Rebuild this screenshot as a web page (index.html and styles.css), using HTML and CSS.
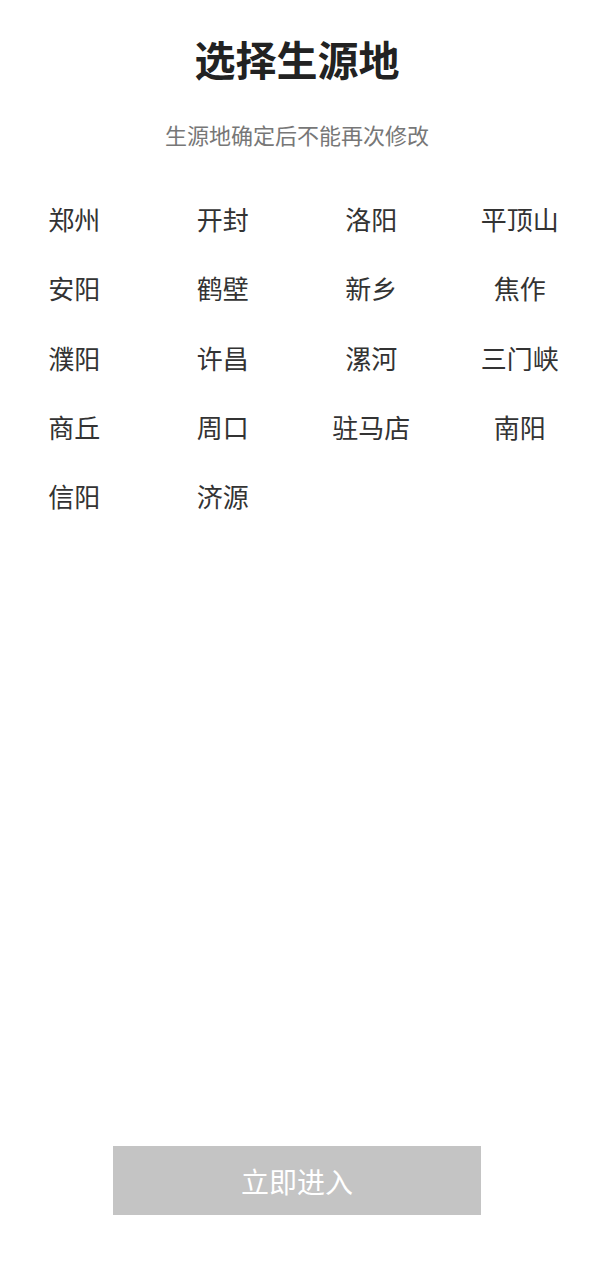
FILE: index.html
```html
<!DOCTYPE html>
<html lang="zh">
<head>
<meta charset="utf-8">
<title>选择生源地</title>
<link rel="stylesheet" href="styles.css">
</head>
<body>
<div class="page">
  <h1 class="title">选择生源地</h1>
  <p class="subtitle">生源地确定后不能再次修改</p>
  <ul class="cities">
    <li>郑州</li><li>开封</li><li>洛阳</li><li>平顶山</li>
    <li>安阳</li><li>鹤壁</li><li>新乡</li><li>焦作</li>
    <li>濮阳</li><li>许昌</li><li>漯河</li><li>三门峡</li>
    <li>商丘</li><li>周口</li><li>驻马店</li><li>南阳</li>
    <li>信阳</li><li>济源</li>
  </ul>
  <div class="footer">
    <button class="enter" type="button">立即进入</button>
  </div>
</div>
</body>
</html>
```

FILE: styles.css
```css
html, body {
  margin: 0;
  padding: 0;
  background: #ffffff;
}
body {
  font-family: "Noto Sans CJK SC", "Noto Sans", sans-serif;
}
.page {
  display: flex;
  flex-direction: column;
  min-height: 100vh;
}
.title {
  margin: 38px 0 0;
  font-size: 41px;
  line-height: 41px;
  font-weight: 700;
  color: #222222;
  text-align: center;
}
.subtitle {
  margin: 44px 0 0;
  font-size: 22px;
  line-height: 22px;
  color: #777777;
  text-align: center;
}
.cities {
  list-style: none;
  margin: 39px 0 0;
  padding: 0;
  display: grid;
  grid-template-columns: repeat(4, 1fr);
  grid-auto-rows: 69.3px;
}
.cities li {
  display: flex;
  align-items: center;
  justify-content: center;
  font-size: 26px;
  color: #333333;
}
.footer {
  margin-top: auto;
  display: flex;
  justify-content: center;
  padding-bottom: 65px;
}
.enter {
  width: 368px;
  height: 69px;
  border: none;
  border-radius: 0;
  background: #c4c4c4;
  color: #ffffff;
  font-family: "Noto Sans CJK SC", "Noto Sans", sans-serif;
  font-size: 28px;
  padding: 0;
}
```
